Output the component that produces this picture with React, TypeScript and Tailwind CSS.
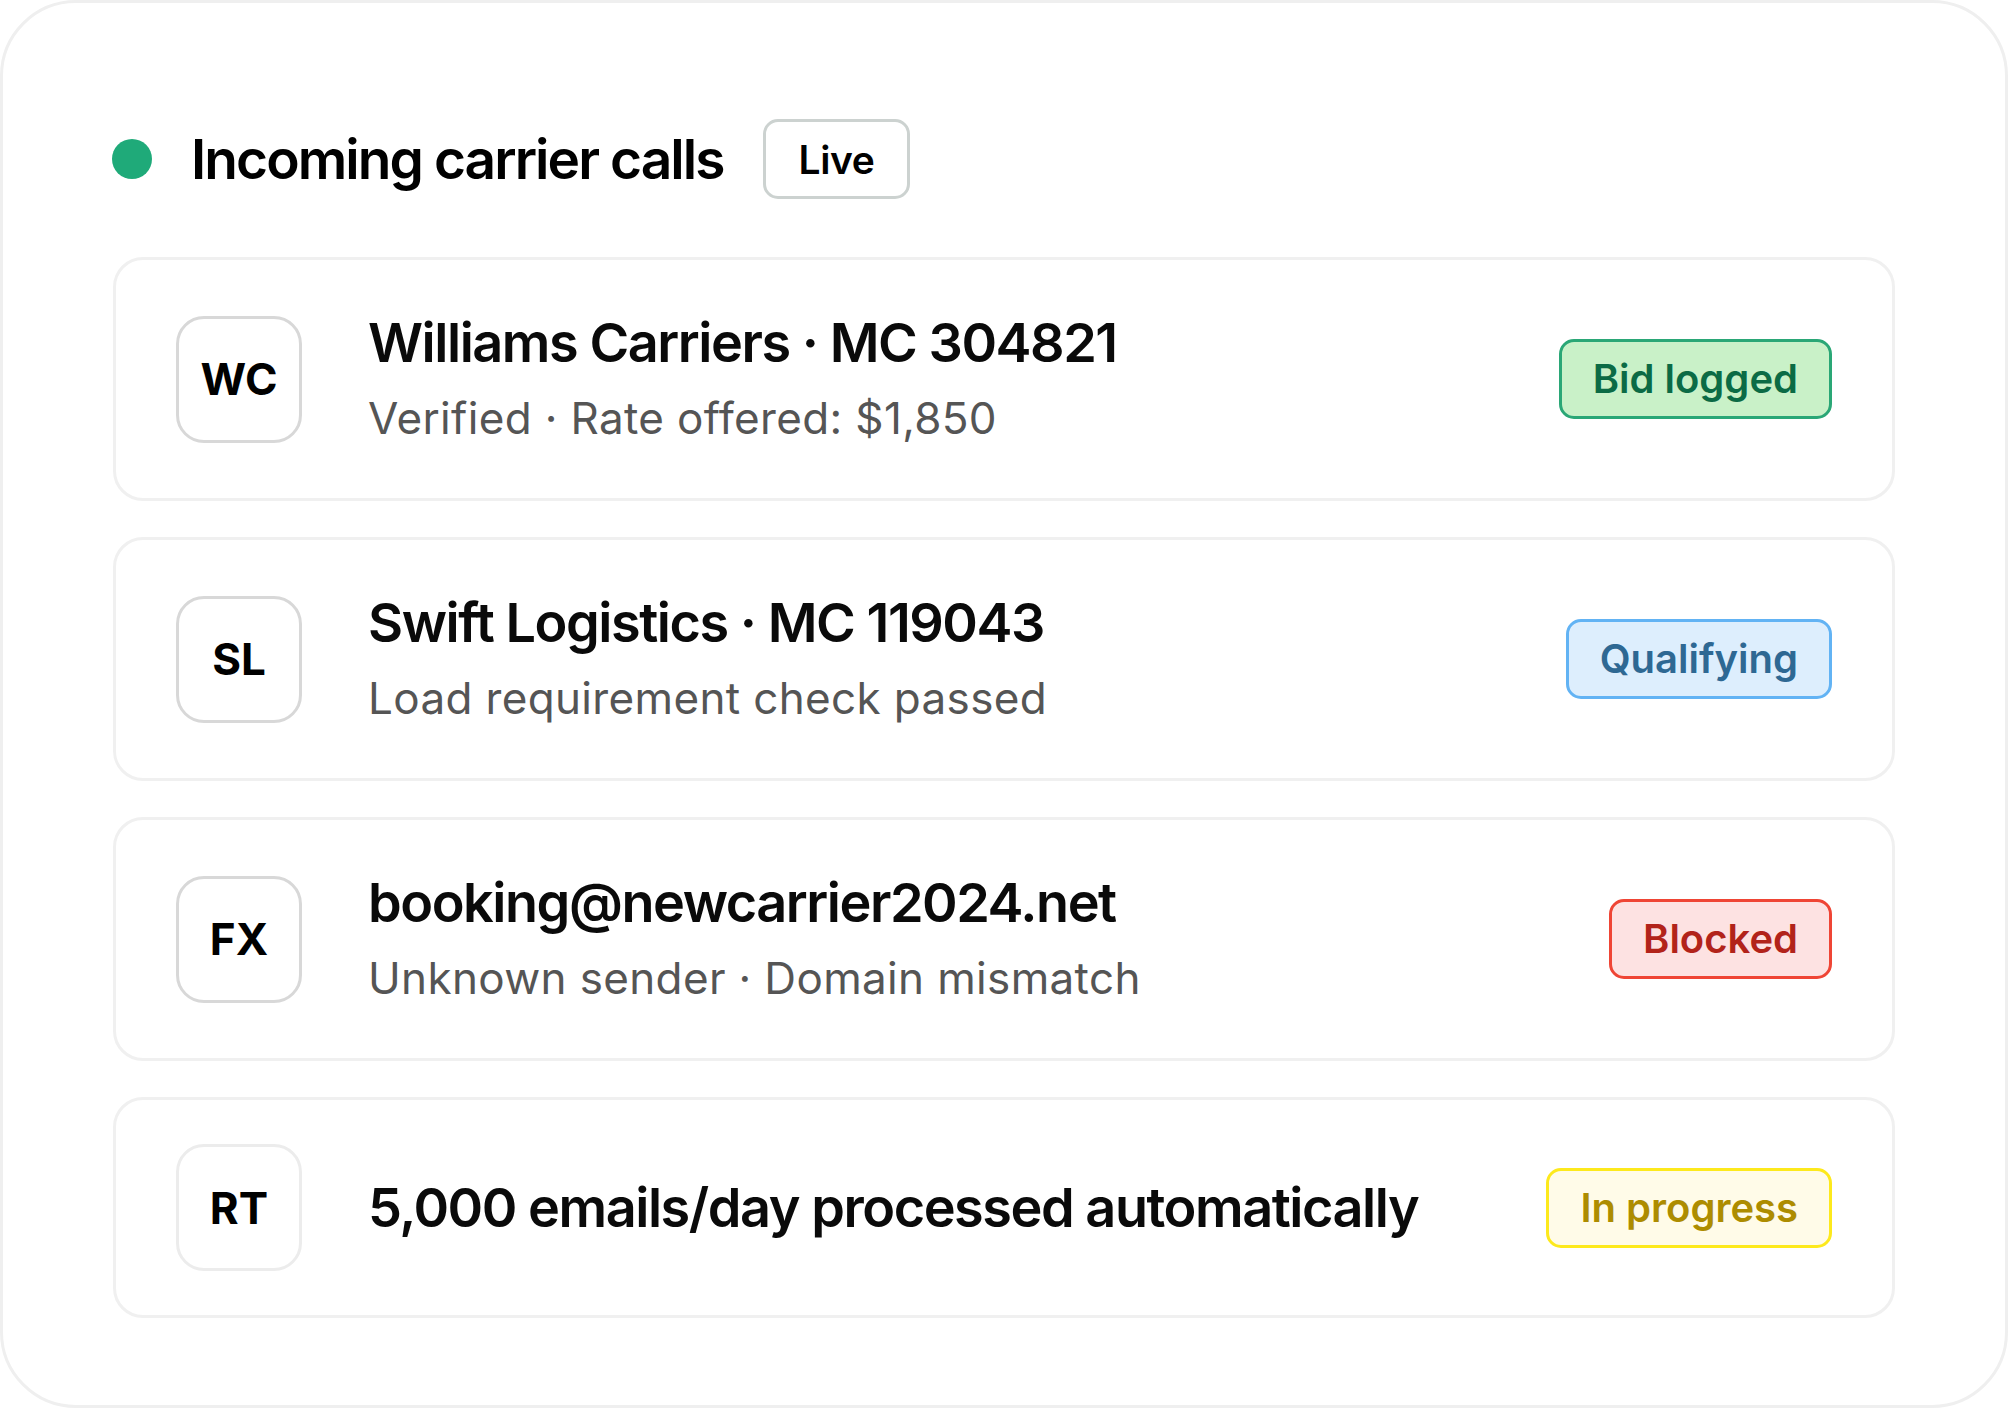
import React from 'react';

type Tone = 'green' | 'blue' | 'red' | 'yellow';

const toneClasses: Record<Tone, string> = {
  green: 'border-[#2aa776] bg-[#c9f1c8] text-[#0b6b45]',
  blue: 'border-[#62b3f4] bg-[#ddeefd] text-[#2e6893]',
  red: 'border-[#ef4535] bg-[#fde2e2] text-[#b2231a]',
  yellow: 'border-[#fde91c] bg-[#fffbe8] text-[#ad8c00]',
};

const calls: {
  initials: string;
  title: string;
  subtitle?: string;
  status: string;
  tone: Tone;
  faded?: boolean;
}[] = [
  {
    initials: 'WC',
    title: 'Williams Carriers · MC 304821',
    subtitle: 'Verified · Rate offered: $1,850',
    status: 'Bid logged',
    tone: 'green',
  },
  {
    initials: 'SL',
    title: 'Swift Logistics · MC 119043',
    subtitle: 'Load requirement check passed',
    status: 'Qualifying',
    tone: 'blue',
  },
  {
    initials: 'FX',
    title: 'booking@newcarrier2024.net',
    subtitle: 'Unknown sender · Domain mismatch',
    status: 'Blocked',
    tone: 'red',
  },
  {
    initials: 'RT',
    title: '5,000 emails/day processed automatically',
    status: 'In progress',
    tone: 'yellow',
    faded: true,
  },
];

function StatusBadge({ label, tone }: { label: string; tone: Tone }) {
  return (
    <span
      className={`inline-flex h-[80px] items-center rounded-[15px] border-[3px] px-[31px] text-[40px] font-semibold leading-none ${toneClasses[tone]}`}
    >
      {label}
    </span>
  );
}

function CallRow({ call }: { call: (typeof calls)[number] }) {
  return (
    <div className="flex items-center rounded-[30px] border-[3px] border-[#f0f0f0] bg-white px-[60px] py-[44px]">
      <div
        className={`flex h-[127px] w-[126px] shrink-0 items-center justify-center rounded-[28px] border-[3px] text-[44px] font-bold text-black ${
          call.faded ? 'border-[#ececec]' : 'border-[#d8d8d8]'
        }`}
      >
        {call.initials}
      </div>
      <div className="ml-[66px] flex min-w-0 flex-1 flex-col">
        <p className="text-[54px] font-semibold leading-[78px] tracking-[-0.027em] text-[#0a0a0a]">{call.title}</p>
        {call.subtitle && (
          <p className="text-[44px] font-normal leading-[72px] tracking-[0.008em] text-[#555555]">{call.subtitle}</p>
        )}
      </div>
      <StatusBadge label={call.status} tone={call.tone} />
    </div>
  );
}

export default function App() {
  return (
    <div className="bg-white font-['Inter',sans-serif]">
      <section className="flex h-[1408px] w-[2008px] flex-col rounded-[76px] border-[3px] border-[#efefef] bg-white px-[110px] pt-[116px]">
        <div className="flex h-[80px] items-center">
          <span className="ml-[-1px] h-[40px] w-[40px] rounded-full bg-[#1faa79]" />
          <h2 className="ml-[39px] text-[55px] font-semibold leading-none tracking-[-0.035em] text-black">
            Incoming carrier calls
          </h2>
          <span className="ml-[39px] inline-flex h-[80px] items-center rounded-[15px] border-[3px] border-[#ccd2d0] px-[33px] text-[39px] font-semibold leading-none tracking-[-0.01em] text-black">
            Live
          </span>
        </div>

        <div className="mt-[58px] flex flex-col gap-[36px]">
          {calls.map((call) => (
            <CallRow key={call.initials} call={call} />
          ))}
        </div>
      </section>
    </div>
  );
}
